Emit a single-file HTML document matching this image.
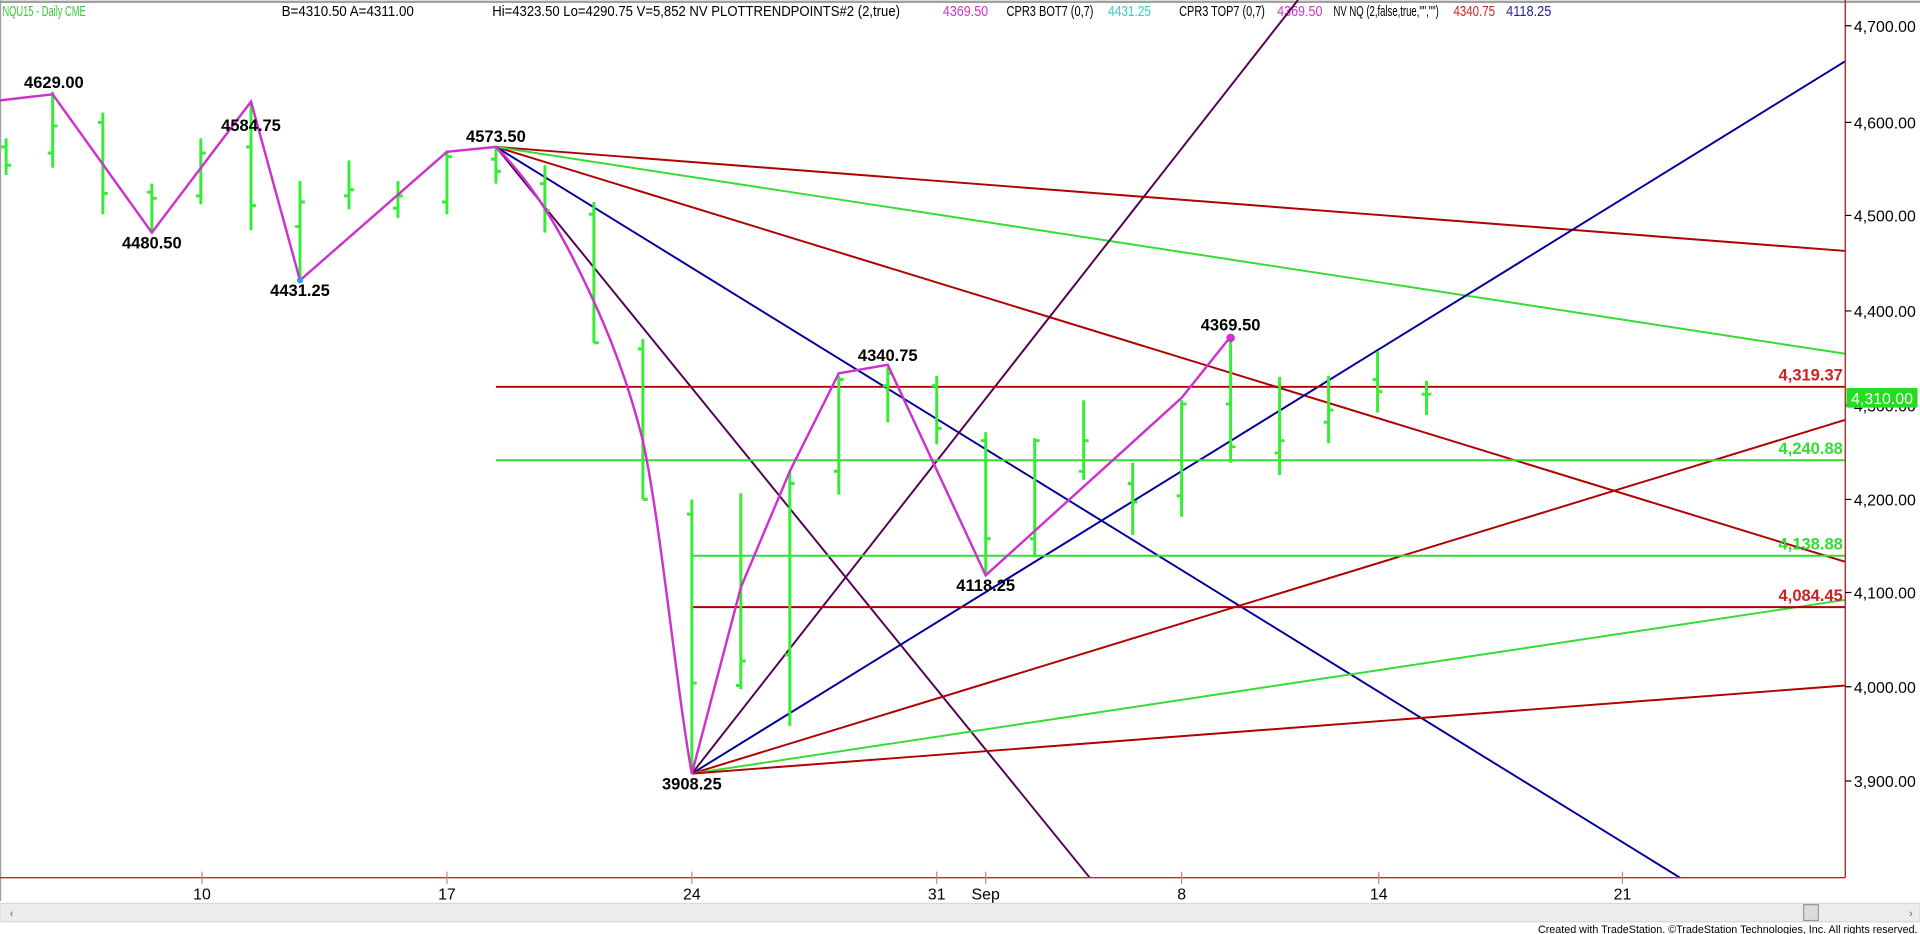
<!DOCTYPE html>
<html><head><meta charset="utf-8"><style>
html,body{margin:0;padding:0;background:#fff;overflow:hidden}
svg{display:block}
text{font-family:"Liberation Sans Narrow","Liberation Sans",sans-serif}
.h{font-size:12px}
.b{font-size:13.5px;font-weight:bold;fill:#000}
.ax{font-size:13px;fill:#000}
</style></head><body>
<svg width="1920" height="934" viewBox="0 0 1568 763" preserveAspectRatio="none" xmlns="http://www.w3.org/2000/svg">
<rect x="0" y="0" width="1568" height="763" fill="#fff"/>
<line x1="0" y1="1.5" x2="1568" y2="1.5" stroke="#a0a0a0" stroke-width="2"/>
<line x1="0.5" y1="0" x2="0.5" y2="736" stroke="#a0a0a0"/>
<!-- header -->
<g lengthAdjust="spacingAndGlyphs">
<text class="h" x="2" y="13" fill="#33cc33" textLength="68" lengthAdjust="spacingAndGlyphs">NQU15 - Daily  CME</text>
<text class="h" x="230" y="13" fill="#000" textLength="108" lengthAdjust="spacingAndGlyphs">B=4310.50  A=4311.00</text>
<text class="h" x="402" y="13" fill="#000" textLength="333" lengthAdjust="spacingAndGlyphs">Hi=4323.50  Lo=4290.75  V=5,852  NV  PLOTTRENDPOINTS#2 (2,true)</text>
<text class="h" x="770" y="13" fill="#cc33cc" textLength="37" lengthAdjust="spacingAndGlyphs">4369.50</text>
<text class="h" x="822" y="13" fill="#000" textLength="71" lengthAdjust="spacingAndGlyphs">CPR3 BOT7 (0,7)</text>
<text class="h" x="905" y="13" fill="#33cccc" textLength="35" lengthAdjust="spacingAndGlyphs">4431.25</text>
<text class="h" x="963" y="13" fill="#000" textLength="70" lengthAdjust="spacingAndGlyphs">CPR3 TOP7 (0,7)</text>
<text class="h" x="1043" y="13" fill="#cc33cc" textLength="37" lengthAdjust="spacingAndGlyphs">4369.50</text>
<text class="h" x="1089" y="13" fill="#000" textLength="86" lengthAdjust="spacingAndGlyphs">NV NQ (2,false,true,"","")</text>
<text class="h" x="1187" y="13" fill="#cc2222" textLength="34" lengthAdjust="spacingAndGlyphs">4340.75</text>
<text class="h" x="1230" y="13" fill="#2222aa" textLength="37" lengthAdjust="spacingAndGlyphs">4118.25</text>
</g>

<!-- trend lines -->
<g stroke-width="1.6" fill="none">
<line x1="405" y1="120" x2="1507" y2="205" stroke="#b00000"/>
<line x1="405" y1="120" x2="1507" y2="459" stroke="#b00000"/>
<line x1="405" y1="120" x2="1507" y2="289" stroke="#33dd33"/>
<line x1="405" y1="120" x2="1372" y2="717" stroke="#000099"/>
<line x1="405" y1="120" x2="890" y2="717" stroke="#550055"/>
<line x1="565" y1="632" x2="1060" y2="0" stroke="#550055"/>
<line x1="565" y1="632" x2="1507" y2="50" stroke="#000099"/>
<line x1="565" y1="632" x2="1507" y2="343" stroke="#b00000"/>
<line x1="565" y1="632" x2="1507" y2="490" stroke="#33dd33"/>
<line x1="565" y1="632" x2="1507" y2="560" stroke="#b00000"/>
<line x1="405" y1="316" x2="1507" y2="316" stroke="#b00000"/>
<line x1="405" y1="376" x2="1507" y2="376" stroke="#33dd33"/>
<line x1="565" y1="454" x2="1507" y2="454" stroke="#33dd33"/>
<line x1="565" y1="496" x2="1507" y2="496" stroke="#b00000"/>
</g>

<!-- bars -->
<g stroke="#33ee33" stroke-width="2.4">
<path d="M5 113V143M1 120H5M5 135H9"/>
<path d="M43 75V137M39 125H43M43 103H47"/>
<path d="M84 92V175M80 100H84M84 158H88"/>
<path d="M124 150V190M120 157H124M124 162H128"/>
<path d="M164 113V167M160 160H164M164 125H168"/>
<path d="M205 83V188M201 120H205M205 168H209"/>
<path d="M245 148V230M241 185H245M245 165H249"/>
<path d="M285 131V171M281 160H285M285 155H289"/>
<path d="M325 148V178M321 170H325M325 160H329"/>
<path d="M365 123V175M361 165H365M365 128H369"/>
<path d="M405 120V150M401 130H405M405 140H409"/>
<path d="M445 135V190M441 150H445M445 172H449"/>
<path d="M485 165V280M481 175H485M485 280H489"/>
<path d="M525 277V408M521 285H525M525 408H529"/>
<path d="M565 408V632M561 420H565M565 558H569"/>
<path d="M605 403V563M601 560H605M605 540H609"/>
<path d="M645 385V593M641 535H645M645 395H649"/>
<path d="M685 307V404M681 385H685M685 310H689"/>
<path d="M725 300V345M721 315H725M725 305H729"/>
<path d="M765 307V363M761 315H765M765 350H769"/>
<path d="M805 353V470M801 360H805M805 440H809"/>
<path d="M845 358V455M841 440H845M845 360H849"/>
<path d="M885 327V392M881 385H885M885 360H889"/>
<path d="M925 378V437M921 395H925M925 410H929"/>
<path d="M965 327V422M961 405H965M965 330H969"/>
<path d="M1005 275V378M1001 330H1005M1005 365H1009"/>
<path d="M1045 308V388M1041 370H1045M1045 360H1049"/>
<path d="M1085 307V362M1081 345H1085M1085 335H1089"/>
<path d="M1125 287V337M1121 310H1125M1125 320H1129"/>
<path d="M1165 311V339M1161 322H1165M1165 322H1169"/>
</g>

<!-- zigzag -->
<path d="M0 82L43 77L124 190L205 83L245 229L365 124L405 120C430 145 450 175 470 215C490 255 510 300 525 360C540 430 552 560 565 632L605 480L645 385L685 305L725 298L805 470L965 325L1005 275" fill="none" stroke="#cc33cc" stroke-width="2"/>
<circle cx="1005" cy="276" r="3.5" fill="#cc33cc"/>
<circle cx="245" cy="229" r="2.5" fill="#3399ff"/>

<!-- labels -->
<g class="b" text-anchor="middle">
<text x="44" y="72">4629.00</text>
<text x="124" y="203">4480.50</text>
<text x="205" y="107">4584.75</text>
<text x="245" y="242">4431.25</text>
<text x="405" y="116">4573.50</text>
<text x="565" y="645">3908.25</text>
<text x="725" y="295">4340.75</text>
<text x="805" y="483">4118.25</text>
<text x="1005" y="270">4369.50</text>
</g>
<g font-weight="bold" font-size="13.5" text-anchor="end">
<text x="1505" y="311" fill="#cc2222">4,319.37</text>
<text x="1505" y="371" fill="#33dd33">4,240.88</text>
<text x="1505" y="449" fill="#33dd33">4,138.88</text>
<text x="1505" y="491" fill="#cc2222">4,084.45</text>
</g>

<!-- axes -->
<line x1="1507" y1="0" x2="1507" y2="717" stroke="#b03030" stroke-width="1.2"/>
<line x1="0" y1="717" x2="1507" y2="717" stroke="#b03030" stroke-width="1.2"/>
<g class="ax">
<text x="1514" y="26">4,700.00</text>
<text x="1514" y="105">4,600.00</text>
<text x="1514" y="181">4,500.00</text>
<text x="1514" y="259">4,400.00</text>
<text x="1514" y="336">4,300.00</text>
<text x="1514" y="413">4,200.00</text>
<text x="1514" y="489">4,100.00</text>
<text x="1514" y="566">4,000.00</text>
<text x="1514" y="643">3,900.00</text>
</g>
<g stroke="#000"><path d="M1507 21H1512M1507 100H1512M1507 176H1512M1507 254H1512M1507 331H1512M1507 408H1512M1507 484H1512M1507 561H1512M1507 638H1512"/></g>
<rect x="1508" y="317" width="58" height="16" fill="#22dd22"/>
<text x="1537" y="330" font-size="13" fill="#fff" text-anchor="middle">4,310.00</text>
<g stroke="#d08080"><path d="M165 712V722M365 712V722M565 712V722M765 712V722M805 712V722M965 712V722M1126 712V722M1325 712V722"/></g>
<g class="ax" text-anchor="middle">
<text x="165" y="735">10</text><text x="365" y="735">17</text><text x="565" y="735">24</text>
<text x="765" y="735">31</text><text x="805" y="735">Sep</text><text x="965" y="735">8</text>
<text x="1126" y="735">14</text><text x="1325" y="735">21</text>
</g>
<!-- scrollbar -->
<rect x="0" y="738" width="1568" height="15" fill="#ececec" stroke="#d8d8d8"/>
<rect x="1473" y="739" width="12" height="13" fill="#dcdcdc" stroke="#999"/>
<text x="8" y="749" font-size="9" fill="#666">‹</text>
<text x="1559" y="749" font-size="9" fill="#666">›</text>
<text x="1566" y="762" font-size="9" fill="#000" text-anchor="end" textLength="310" lengthAdjust="spacingAndGlyphs">Created with TradeStation. ©TradeStation Technologies, Inc. All rights reserved.</text>
</svg>
</body></html>
